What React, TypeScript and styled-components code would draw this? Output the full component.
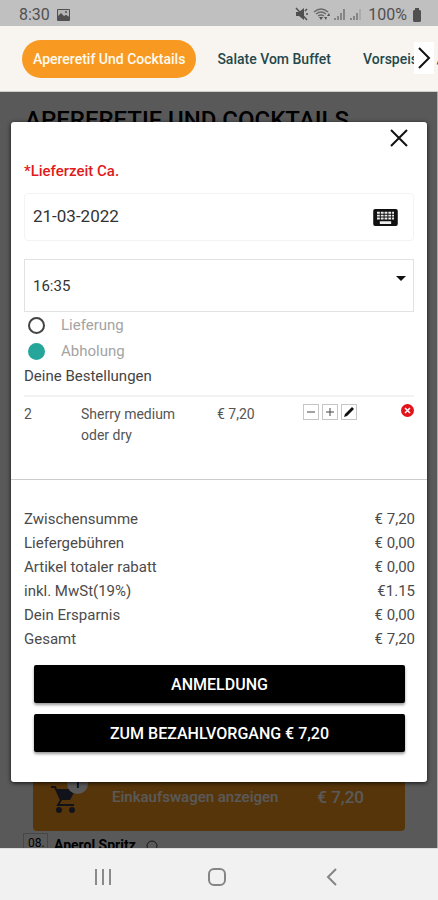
import React, { useState } from "react";
import styled, { createGlobalStyle } from "styled-components";

const GlobalStyle = createGlobalStyle`
  * { box-sizing: border-box; }
  body { margin: 0; background: #f1f1f1; color: #444; font: 14px/24px Roboto, sans-serif; }
  button, input, select { font-family: inherit; }
  button { cursor: pointer; }
`;

const Screen = styled.div`
  display: flex;
  flex-direction: column;
  height: 100vh;
  min-height: 860px;
  overflow: hidden;
`;

const StatusBar = styled.header`
  display: flex;
  flex: none;
  align-items: center;
  justify-content: space-between;
  height: 26px;
  padding: 3px 16px 0 19px;
  background: #c0c0c0;
  color: #505050;
  font-size: 16px;
  line-height: 20px;
`;

const StatusGroup = styled.div<{ $gap: number }>`
  display: flex;
  align-items: center;
  gap: ${(p) => p.$gap}px;
`;

const Categories = styled.nav`
  position: relative;
  display: flex;
  flex: none;
  align-items: center;
  gap: 21px;
  height: 66px;
  padding-left: 22px;
  overflow: hidden;
  background: #f8f5f1;
  border-bottom: 1px solid #d0cecb;
`;

const Category = styled.a<{ $active?: boolean }>`
  flex: none;
  padding: ${(p) => (p.$active ? "0 11px" : "0")};
  margin-right: ${(p) => (p.$active ? "0" : "11px")};
  border-radius: 19px;
  background: ${(p) => (p.$active ? "#f89a22" : "transparent")};
  color: ${(p) => (p.$active ? "#fffaf0" : "#24484a")};
  font-size: 14px;
  font-weight: 500;
  line-height: 38px;
  text-decoration: none;
  white-space: nowrap;
`;

const NextButton = styled.button`
  position: absolute;
  top: 16px;
  right: 4px;
  display: grid;
  place-items: center;
  width: 20px;
  height: 32px;
  padding: 0;
  border: 0;
  background: #fff;
`;

const Main = styled.main`
  position: relative;
  display: flex;
  flex: 1;
  flex-direction: column;
  justify-content: space-between;
  min-height: 0;
  overflow: hidden;
  border-right: 1px solid #aaa;
  background: #fff;
`;

const PageTitle = styled.h1`
  margin: 14px 0 0 25px;
  color: #000;
  font-size: 24px;
  font-weight: 500;
  line-height: 28px;
`;

const CartBar = styled.button`
  display: flex;
  align-items: flex-start;
  width: calc(100% - 65px);
  height: 60px;
  margin: 0 32px 0 33px;
  padding: 14px 41px 0 17px;
  border: 0;
  border-radius: 4px;
  background: #f8981d;
  color: #fff;
  font-size: 15px;
  font-weight: 500;
  line-height: 24px;
`;

const CartIcon = styled.span`
  position: relative;
  width: 62px;
  height: 30px;
  text-align: left;
`;

const CartCount = styled.span`
  position: absolute;
  top: -12px;
  left: 17px;
  width: 21px;
  height: 21px;
  border-radius: 50%;
  background: #fff;
  color: #000;
  font-size: 13px;
  line-height: 21px;
  text-align: center;
`;

const CartPrice = styled.span`
  margin-left: auto;
  font-size: 17px;
`;

const Product = styled.div`
  display: flex;
  gap: 6px;
  height: 17px;
  padding: 2px 0 0 23px;
  overflow: hidden;
  color: #000;
  font-size: 14px;
  font-weight: 700;
`;

const ProductThumb = styled.span`
  width: 25px;
  height: 24px;
  padding-left: 4px;
  border: 1px solid #ccc;
  border-bottom: 0;
  font-size: 12px;
  font-weight: 400;
  line-height: 18px;
`;

const ProductInfo = styled.svg`
  margin: 7px 0 0 4px;
`;

const Overlay = styled.div`
  position: absolute;
  inset: 0;
  padding: 30px 10px 0 11px;
  background: rgba(0, 0, 0, 0.65);
`;

const Dialog = styled.section`
  padding-bottom: 30px;
  overflow: hidden;
  border-radius: 3px;
  background: #fff;
  box-shadow: 0 1px 4px rgba(0, 0, 0, 0.8);
`;

const CloseRow = styled.div`
  display: flex;
  justify-content: flex-end;
  padding: 6px 18px 0;
`;

const IconButton = styled.button`
  display: grid;
  place-items: center;
  padding: 0;
  border: 0;
  background: none;
`;

const Form = styled.div`
  display: flex;
  flex-direction: column;
  padding: 8px 13px 0;
`;

const FieldLabel = styled.label`
  color: #e01b1b;
  font-size: 15px;
  font-weight: 500;
  line-height: 30px;
`;

const DateField = styled.div`
  display: flex;
  align-items: center;
  height: 48px;
  margin: 7px 0 18px;
  padding: 0 15px 0 8px;
  border: 1px solid #f3f3f3;
  border-radius: 4px;
`;

const DateInput = styled.input`
  flex: 1;
  min-width: 0;
  padding: 0 0 2px;
  border: 0;
  outline: 0;
  background: none;
  color: #333;
  font-size: 17px;
`;

const TimeField = styled.div`
  position: relative;
  display: flex;
`;

const TimeSelect = styled.select`
  flex: 1;
  height: 53px;
  padding: 0 8px;
  appearance: none;
  border: 1px solid #e2e2e2;
  border-radius: 0;
  background: #fff;
  color: #333;
  font-size: 15px;
`;

const Caret = styled.svg`
  position: absolute;
  top: 17px;
  right: 8px;
  pointer-events: none;
`;

const Choice = styled.label`
  display: flex;
  align-items: center;
  gap: 16px;
  height: 26px;
  padding-left: 4px;
  color: #a3a3a3;
  font-size: 15px;
`;

const Radio = styled.input`
  width: 17px;
  height: 17px;
  margin: 0;
  appearance: none;
  border: 2px solid #444;
  border-radius: 50%;
  &:checked {
    border-color: #26a69a;
    background: #26a69a;
  }
`;

const Subtitle = styled.h2`
  margin: 0;
  padding-bottom: 7px;
  border-bottom: 2px solid #f3f3f3;
  color: #444;
  font-size: 15px;
  font-weight: 400;
  line-height: 24px;
`;

const Orders = styled.table`
  width: 100%;
  height: 82px;
  table-layout: fixed;
  border-collapse: collapse;
  color: #555;
  font-size: 14px;
  line-height: 21px;
`;

const Cell = styled.td<{ $width?: string }>`
  width: ${(p) => p.$width ?? "auto"};
  padding: 7px 0 0;
  vertical-align: top;
`;

const Tools = styled.div<{ $end?: boolean }>`
  display: flex;
  justify-content: ${(p) => (p.$end ? "flex-end" : "flex-start")};
  gap: 3px;
`;

const ToolButton = styled(IconButton)`
  width: 16px;
  height: 16px;
  border: 1px solid #c6c6c6;
  background: #fff;
`;

const Totals = styled.dl`
  margin: 0;
  padding: 27px 12px 14px 13px;
  border-top: 1px solid #ccc;
`;

const Total = styled.div`
  display: flex;
  justify-content: space-between;
  color: #4b4b4b;
  font-size: 15px;
  line-height: 24px;
  dd { margin: 0; }
`;

const Actions = styled.div`
  display: flex;
  flex-direction: column;
  gap: 11px;
  padding: 0 22px 0 23px;
`;

const ActionButton = styled.button`
  height: 38px;
  padding: 0;
  border: 0;
  border-radius: 2px;
  background: #000;
  box-shadow: 0 2px 3px rgba(0, 0, 0, 0.4);
  color: #fff;
  font-size: 16px;
  font-weight: 500;
`;

const SystemBar = styled.footer`
  display: flex;
  flex: none;
  justify-content: space-between;
  align-items: center;
  height: 52px;
  padding: 4px 90px 0 88px;
  background: #f1f1f1;
  border-top: 1px solid #ddd;
`;

const totals = [
  ["Zwischensumme", "€ 7,20"],
  ["Liefergebühren", "€ 0,00"],
  ["Artikel totaler rabatt", "€ 0,00"],
  ["inkl. MwSt(19%)", "€1.15"],
  ["Dein Ersparnis", "€ 0,00"],
  ["Gesamt", "€ 7,20"],
];

function StatusIcons() {
  return (
    <svg width="68" height="15" viewBox="0 0 68 15" fill="#505050" aria-hidden="true">
      <path d="M1 5h3l5-4v12l-5-4H1z" />
      <path d="M1 1l11 12M10 4l2-2M11 7h2" stroke="#505050" strokeWidth="1.5" />
      <g fill="none" stroke="#6a6a6a" strokeWidth="1.5">
        <path d="M19 5q7-6 14 0M21 7q5-4 10 0M23 9q3-2 6 0" />
      </g>
      <path d="M24 10h4l-2 3zM29 10l2 3 1-3zM32 9l2-3 1 3z" />
      <g fill="#858585">
        <path d="M39 11h2v2h-2zM42 9h2v4h-2zM45 6h2v7h-2zM48 2h2v11h-2zM55 11h2v2h-2zM58 9h2v4h-2zM61 6h2v7h-2z" />
        <path d="M64 2h2v11h-2z" opacity=".35" />
      </g>
    </svg>
  );
}

function KeyboardIcon() {
  return (
    <svg width="25" height="17" viewBox="0 0 26 18" aria-hidden="true">
      <rect x="0" y="0" width="26" height="18" rx="2" fill="#111" />
      <path d="M4 3h3v2H4zM8 3h3v2H8zM12 3h3v2h-3zM16 3h3v2h-3zM20 3h2v2h-2zM4 6h3v2H4zM8 6h3v2H8zM12 6h3v2h-3zM16 6h3v2h-3zM20 6h2v2h-2zM4 9h3v2H4zM8 9h3v2H8zM12 9h3v2h-3zM16 9h3v2h-3zM20 9h2v2h-2zM7 13h12v3H7z" fill="#eee" />
    </svg>
  );
}

export default function App() {
  const [mode, setMode] = useState("Abholung");
  const [date, setDate] = useState("21-03-2022");
  return (
    <Screen>
      <GlobalStyle />
      <StatusBar>
        <StatusGroup $gap={7}>
          <span>8:30</span>
          <svg width="13" height="12" viewBox="0 0 13 12" aria-hidden="true">
            <rect width="13" height="12" rx="1" fill="#505050" />
            <path d="M1 8l3-3 3 3 2-2 3 2V1H1z" fill="#b5b5b5" />
            <circle cx="9" cy="3" r="1" fill="#505050" />
            <path d="M1 7l3-3 3 3 2-1 3 2v1H1z" fill="#505050" />
          </svg>
        </StatusGroup>
        <StatusGroup $gap={5}>
          <StatusIcons />
          <span>100%</span>
          <svg width="10" height="14" viewBox="0 0 10 14" fill="#505050" aria-hidden="true">
            <path d="M3 0h4v2h1l1 1v10l-1 1H2l-1-1V3l1-1h1z" />
          </svg>
        </StatusGroup>
      </StatusBar>

      <Categories>
        <Category href="#cocktails" $active>Apereretif Und Cocktails</Category>
        <Category href="#salate">Salate Vom Buffet</Category>
        <Category href="#vorspeisen">Vorspeisen /</Category>
        <NextButton aria-label="Weiter">
          <svg width="14" height="24" viewBox="0 0 14 24" fill="none" stroke="#111" strokeWidth="2" aria-hidden="true">
            <path d="M2 2l10 10L2 22" />
          </svg>
        </NextButton>
      </Categories>

      <Main>
        <PageTitle>APERERETIF UND COCKTAILS</PageTitle>
        <div>
          <CartBar>
            <CartIcon>
              <svg width="27" height="29" viewBox="0 0 27 29" fill="none" aria-hidden="true">
                <path d="M6 4h18l1 2-5 9H10z" fill="#34374a" />
                <path d="M1 2h4l6 13-3 5h16" stroke="#34374a" strokeWidth="2" />
                <circle cx="9" cy="25" r="3" fill="#34374a" />
                <circle cx="22" cy="25" r="3" fill="#34374a" />
              </svg>
              <CartCount>1</CartCount>
            </CartIcon>
            <span>Einkaufswagen anzeigen</span>
            <CartPrice>€ 7,20</CartPrice>
          </CartBar>
          <Product>
            <ProductThumb>08.</ProductThumb>
            <span>Aperol Spritz</span>
            <ProductInfo width="12" height="12" viewBox="0 0 12 12" fill="none" stroke="#444" aria-hidden="true">
              <circle cx="6" cy="6" r="5" />
            </ProductInfo>
          </Product>
        </div>

        <Overlay>
          <Dialog role="dialog" aria-modal="true" aria-label="Deine Bestellungen">
            <CloseRow>
              <IconButton aria-label="Schließen">
                <svg width="20" height="20" viewBox="0 0 20 20" stroke="#111" strokeWidth="2" aria-hidden="true">
                  <path d="M2 2l16 16M18 2L2 18" />
                </svg>
              </IconButton>
            </CloseRow>
            <Form>
              <FieldLabel htmlFor="date">*Lieferzeit Ca.</FieldLabel>
              <DateField>
                <DateInput id="date" value={date} onChange={(e) => setDate(e.target.value)} />
                <IconButton aria-label="Tastatur"><KeyboardIcon /></IconButton>
              </DateField>
              <TimeField>
                <TimeSelect aria-label="Uhrzeit" defaultValue="16:35">
                  <option>16:35</option>
                </TimeSelect>
                <Caret width="10" height="5" viewBox="0 0 10 5" aria-hidden="true">
                  <path d="M0 0h10L5 5z" fill="#111" />
                </Caret>
              </TimeField>
              {["Lieferung", "Abholung"].map((name) => (
                <Choice key={name}>
                  <Radio type="radio" name="mode" checked={mode === name} onChange={() => setMode(name)} />
                  {name}
                </Choice>
              ))}
              <Subtitle>Deine Bestellungen</Subtitle>
              <Orders>
                <tbody>
                  <tr>
                    <Cell $width="57px">2</Cell>
                    <Cell $width="136px">Sherry medium<br />oder dry</Cell>
                    <Cell $width="86px">€ 7,20</Cell>
                    <Cell>
                      <Tools>
                        <ToolButton aria-label="Weniger">
                          <svg width="10" height="10" viewBox="0 0 10 10" stroke="#444" aria-hidden="true"><path d="M1 5h8" /></svg>
                        </ToolButton>
                        <ToolButton aria-label="Mehr">
                          <svg width="10" height="10" viewBox="0 0 10 10" stroke="#444" aria-hidden="true"><path d="M1 5h8M5 1v8" /></svg>
                        </ToolButton>
                        <ToolButton aria-label="Bearbeiten">
                          <svg width="12" height="12" viewBox="0 0 12 12" aria-hidden="true">
                            <path d="M1 11l1-3 6-6 2 2-6 6zM8 2l1-1 2 2-1 1z" fill="#111" />
                          </svg>
                        </ToolButton>
                      </Tools>
                    </Cell>
                    <Cell $width="24px">
                      <Tools $end>
                        <IconButton aria-label="Entfernen">
                          <svg width="13" height="13" viewBox="0 0 13 13" aria-hidden="true">
                            <circle cx="6.5" cy="6.5" r="6.5" fill="#e3121b" />
                            <path d="M4 4l5 5M9 4L4 9" stroke="#fff" strokeWidth="1.5" />
                          </svg>
                        </IconButton>
                      </Tools>
                    </Cell>
                  </tr>
                </tbody>
              </Orders>
            </Form>
            <Totals>
              {totals.map(([name, value]) => (
                <Total key={name}>
                  <dt>{name}</dt>
                  <dd>{value}</dd>
                </Total>
              ))}
            </Totals>
            <Actions>
              <ActionButton>ANMELDUNG</ActionButton>
              <ActionButton>ZUM BEZAHLVORGANG € 7,20</ActionButton>
            </Actions>
          </Dialog>
        </Overlay>
      </Main>

      <SystemBar>
        <IconButton aria-label="Letzte Apps">
          <svg width="30" height="18" viewBox="0 0 30 18" stroke="#8a8a8a" strokeWidth="2" aria-hidden="true">
            <path d="M8 1v16M15 1v16M22 1v16" />
          </svg>
        </IconButton>
        <IconButton aria-label="Startseite">
          <svg width="18" height="18" viewBox="0 0 18 18" fill="none" stroke="#858585" strokeWidth="2" aria-hidden="true">
            <rect x="1" y="1" width="16" height="16" rx="5" />
          </svg>
        </IconButton>
        <IconButton aria-label="Zurück">
          <svg width="32" height="18" viewBox="0 0 32 18" fill="none" stroke="#858585" strokeWidth="2" aria-hidden="true">
            <path d="M20 1l-8 8 8 8" />
          </svg>
        </IconButton>
      </SystemBar>
    </Screen>
  );
}
